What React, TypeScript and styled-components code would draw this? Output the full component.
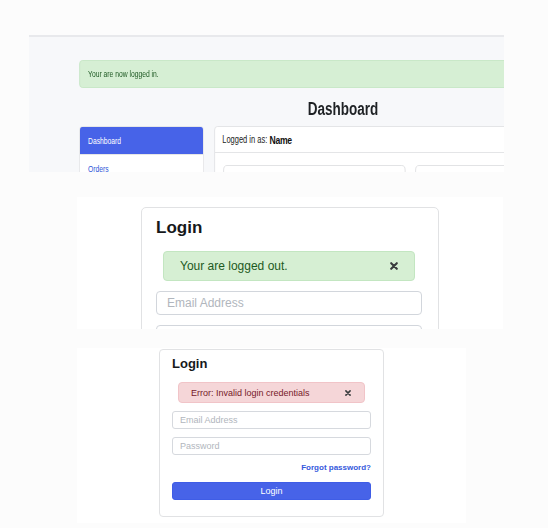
import React from "react";
import styled, { createGlobalStyle, css } from "styled-components";

const Global = createGlobalStyle`
  html, body { margin: 0; padding: 0; background: #fcfcfc; }
  body { font-family: "Liberation Sans", Arial, sans-serif; }
  * { box-sizing: border-box; }
`;

const Page = styled.div`
  width: 548px;
  height: 528px;
  overflow: hidden;
  display: flex;
  flex-direction: column;
  align-items: flex-start;
`;

const Shot = styled.section<{ $top: number; $left: number; $width: number; $height: number; $pad?: string; $bg?: string; $rule?: boolean }>`
  flex-shrink: 0;
  margin-top: ${(p) => p.$top}px;
  margin-left: ${(p) => p.$left}px;
  width: ${(p) => p.$width}px;
  height: ${(p) => p.$height}px;
  padding: ${(p) => p.$pad ?? "0"};
  overflow: hidden;
  background: ${(p) => p.$bg ?? "#ffffff"};
  ${(p) => p.$rule && css`border-top: 2px solid #e8e9ec;`}
`;

/* ---------- Dashboard screenshot (horizontally squeezed capture) ---------- */

const Squeeze = styled.div`
  width: 800px;
  padding: 23px 0 0 66.7px;
  transform: scaleX(0.75);
  transform-origin: 0 0;
`;

const Container = styled.div`
  width: 704px;
  display: flex;
  flex-direction: column;
`;

const FlashAlert = styled.div`
  height: 28px;
  display: flex;
  align-items: center;
  padding: 0 11px;
  background: #d6efd4;
  border: 1px solid #c5e6c4;
  border-radius: 4px;
  color: #1f5a24;
  font-size: 9px;
`;

const PageTitle = styled.h1`
  margin: 4px 0 0;
  line-height: 34px;
  font-size: 18px;
  font-weight: 700;
  text-align: center;
  color: #1e2124;
`;

const Row = styled.div`
  display: flex;
  gap: 13.3px;
  align-items: flex-start;
`;

const SideNav = styled.nav`
  width: 166.7px;
  flex-shrink: 0;
  display: flex;
  flex-direction: column;
  background: #fff;
  border: 1px solid #e2e3e5;
  border-radius: 4px;
  overflow: hidden;
`;

const NavItem = styled.a<{ $active?: boolean }>`
  height: 28px;
  display: flex;
  align-items: center;
  padding-left: 11px;
  font-size: 9px;
  text-decoration: none;
  color: ${(p) => (p.$active ? "#ffffff" : "#2f56d8")};
  background: ${(p) => (p.$active ? "#4763e8" : "#ffffff")};
  border-bottom: 1px solid #e6e6e6;
`;

const Card = styled.div`
  flex: 1;
  background: #fff;
  border: 1px solid #e0e1e3;
  border-radius: 4px;
`;

const CardHeader = styled.div`
  height: 26px;
  display: flex;
  align-items: center;
  padding-left: 10px;
  border-bottom: 1px solid #e4e5e7;
  font-size: 10px;
  color: #222;
`;

const UserName = styled.strong`
  margin-left: 3px;
  font-size: 11.5px;
  font-weight: 700;
  letter-spacing: -0.4px;
  color: #111;
`;

const CardBody = styled.div`
  padding: 12px 11px;
  display: grid;
  grid-template-columns: 1fr 1fr;
  gap: 13.3px;
`;

const Tile = styled.div`
  height: 60px;
  border: 1px solid #dedfe1;
  border-radius: 5px;
`;

/* ---------- Login cards ---------- */

type Size = "lg" | "sm";

const LoginCard = styled.div<{ $size: Size }>`
  background: #fff;
  border: 1px solid #e1e2e4;
  display: flex;
  flex-direction: column;
  ${(p) =>
    p.$size === "lg"
      ? css`
          width: 298px;
          padding: 10px 16px 20px 14px;
          border-radius: 5px;
        `
      : css`
          width: 225px;
          padding: 6px 12px 16px 12px;
          border-radius: 4px;
        `}
`;

const LoginTitle = styled.h2<{ $size: Size }>`
  margin: 0;
  font-weight: 700;
  color: #16181a;
  font-size: ${(p) => (p.$size === "lg" ? 17 : 13)}px;
  line-height: ${(p) => (p.$size === "lg" ? 20 : 16)}px;
`;

const Notice = styled.div<{ $size: Size; $tone: "success" | "error" }>`
  display: flex;
  align-items: center;
  justify-content: space-between;
  border-radius: 4px;
  border: 1px solid ${(p) => (p.$tone === "success" ? "#c3e6c1" : "#f1c4c8")};
  background: ${(p) => (p.$tone === "success" ? "#d6efd3" : "#f5d6d8")};
  color: ${(p) => (p.$tone === "success" ? "#1d5a22" : "#76202a")};
  ${(p) =>
    p.$size === "lg"
      ? css`
          margin: 13px 7px 0;
          height: 30px;
          padding: 0 16px 0 16px;
          font-size: 12px;
        `
      : css`
          margin: 10px 6px 0;
          height: 21px;
          padding: 0 13px 0 12px;
          font-size: 9px;
        `}
`;

const Close = styled.svg<{ $size: Size }>`
  width: ${(p) => (p.$size === "lg" ? 8 : 6)}px;
  height: ${(p) => (p.$size === "lg" ? 8 : 6)}px;
  flex-shrink: 0;
`;

const Field = styled.input<{ $size: Size }>`
  display: block;
  width: 100%;
  font-family: inherit;
  background: #fff;
  outline: none;
  color: #333;
  &::placeholder {
    color: #b1b6bd;
  }
  ${(p) =>
    p.$size === "lg"
      ? css`
          margin-top: 10px;
          height: 24px;
          padding: 0 10px;
          font-size: 12px;
          border: 1.5px solid #d2d6dc;
          border-radius: 4px;
        `
      : css`
          margin-top: 8px;
          height: 18px;
          padding: 0 7px;
          font-size: 9px;
          border: 1px solid #d6d9de;
          border-radius: 3px;
        `}
`;

const Forgot = styled.a`
  margin-top: 5px;
  align-self: flex-end;
  line-height: 16px;
  font-size: 8px;
  font-weight: 700;
  color: #3559dc;
  text-decoration: none;
`;

const SubmitButton = styled.button`
  margin-top: 6px;
  height: 18px;
  border: 1px solid #3f5de6;
  border-radius: 3px;
  background: #4763e8;
  color: #fff;
  font-family: inherit;
  font-size: 9px;
  padding: 0;
`;

const CloseIcon = ({ size }: { size: Size }) => (
  <Close $size={size} viewBox="0 0 10 10">
    <path d="M1.5 1.5 L8.5 8.5 M8.5 1.5 L1.5 8.5" stroke="#3a3c3e" strokeWidth="2.6" strokeLinecap="round" />
  </Close>
);

export default function App() {
  return (
    <>
      <Global />
      <Page>
        <Shot $top={35} $left={29} $width={475} $height={137} $bg="#f7f8fa" $rule>
          <Squeeze>
            <Container>
              <FlashAlert>Your are now logged in.</FlashAlert>
              <PageTitle>Dashboard</PageTitle>
              <Row>
                <SideNav>
                  <NavItem $active>Dashboard</NavItem>
                  <NavItem>Orders</NavItem>
                </SideNav>
                <Card>
                  <CardHeader>
                    Logged in as:<UserName>Name</UserName>
                  </CardHeader>
                  <CardBody>
                    <Tile />
                    <Tile />
                  </CardBody>
                </Card>
              </Row>
            </Container>
          </Squeeze>
        </Shot>

        <Shot $top={25} $left={77} $width={426} $height={132} $pad="10px 0 0 64px">
          <LoginCard $size="lg">
            <LoginTitle $size="lg">Login</LoginTitle>
            <Notice $size="lg" $tone="success">
              <span>Your are logged out.</span>
              <CloseIcon size="lg" />
            </Notice>
            <Field $size="lg" placeholder="Email Address" readOnly />
            <Field $size="lg" placeholder="Password" type="password" readOnly />
          </LoginCard>
        </Shot>

        <Shot $top={19} $left={77} $width={389} $height={175} $pad="1px 0 0 82px">
          <LoginCard $size="sm">
            <LoginTitle $size="sm">Login</LoginTitle>
            <Notice $size="sm" $tone="error">
              <span>Error: Invalid login credentials</span>
              <CloseIcon size="sm" />
            </Notice>
            <Field $size="sm" placeholder="Email Address" readOnly />
            <Field $size="sm" placeholder="Password" type="password" readOnly />
            <Forgot href="#">Forgot password?</Forgot>
            <SubmitButton type="button">Login</SubmitButton>
          </LoginCard>
        </Shot>
      </Page>
    </>
  );
}
